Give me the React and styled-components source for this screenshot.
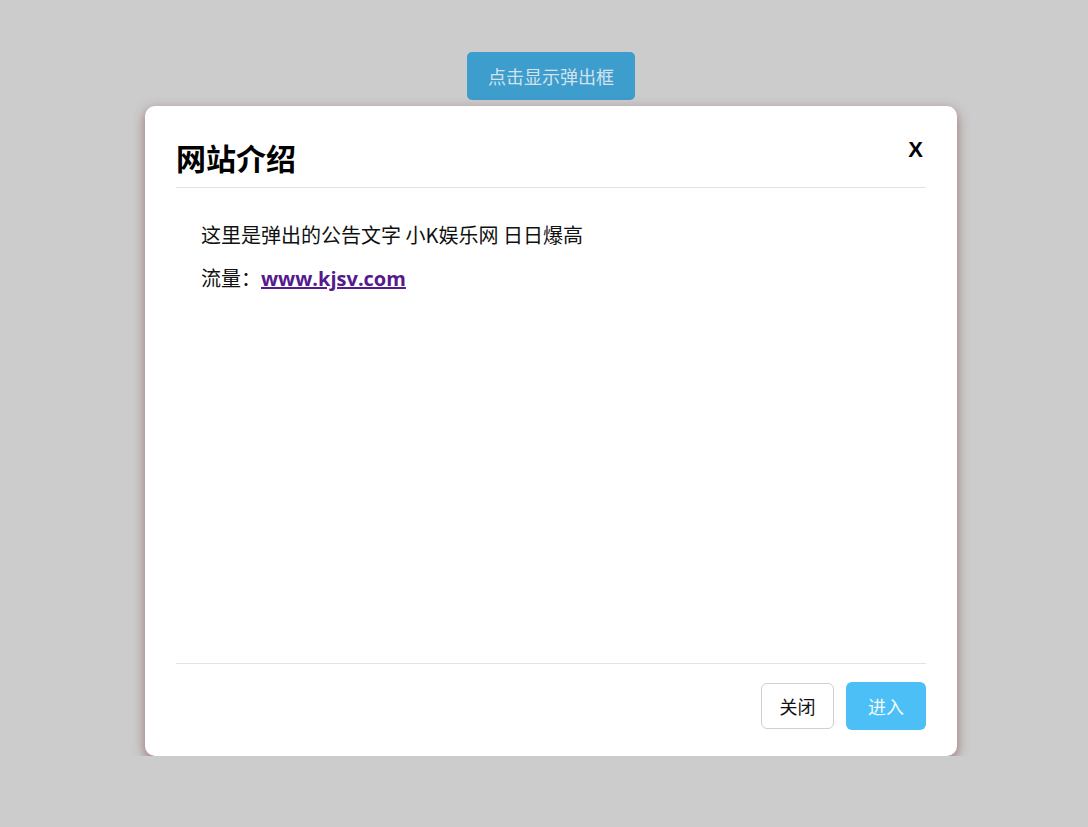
import React, { useState } from 'react';
import styled, { createGlobalStyle } from 'styled-components';

const GlobalStyle = createGlobalStyle`
  body {
    margin: 0;
    background-color: #cccccc;
    font-family: "Noto Sans CJK SC", "Noto Sans", sans-serif;
  }
`;

const Page = styled.div`
  display: flex;
  flex-direction: column;
  align-items: center;
  padding: 52px 0 0 14px;
  gap: 6px;
`;

const ShowButton = styled.button`
  width: 168px;
  height: 48px;
  border: none;
  border-radius: 5px;
  background-color: #3d9dcd;
  color: #d3e3ec;
  font-family: "Noto Sans CJK SC", sans-serif;
  font-size: 18px;
  cursor: pointer;
`;

const Modal = styled.div`
  width: 812px;
  height: 650px;
  box-sizing: border-box;
  padding: 0 31px;
  background-color: #fff;
  border-radius: 10px;
  box-shadow: 0 4px 12px rgba(120, 50, 50, 0.6);
  display: flex;
  flex-direction: column;
`;

const Header = styled.div`
  display: flex;
  justify-content: space-between;
  align-items: flex-start;
  padding: 31px 0 10px;
  border-bottom: 1px solid #e3e3e3;
`;

const Title = styled.h2`
  margin: 0;
  font-size: 30px;
  line-height: 40px;
  font-weight: 700;
  color: #000;
`;

const CloseX = styled.span`
  font-family: "Liberation Sans", Arial, sans-serif;
  font-size: 22px;
  line-height: 24px;
  font-weight: 700;
  color: #000;
  margin: 1px 3px 0 0;
  cursor: pointer;
`;

const Body = styled.div`
  flex: 1;
  padding: 32px 25px;
`;

const Text = styled.p`
  margin: 0 0 13px;
  font-size: 20px;
  line-height: 30px;
  color: #111;
`;

const Link = styled.a`
  font-family: "Open Sans", Verdana, sans-serif;
  font-weight: 700;
  font-size: 20px;
  color: #551a8b;
  text-decoration: underline;
`;

const Footer = styled.div`
  display: flex;
  justify-content: flex-end;
  align-items: center;
  gap: 12px;
  padding: 18px 0 26px;
  border-top: 1px solid #e3e3e3;
`;

const FooterButton = styled.button`
  width: ${(p) => (p.$primary ? '80px' : '73px')};
  height: ${(p) => (p.$primary ? '48px' : '46px')};
  padding: 0;
  border-radius: 6px;
  border: ${(p) => (p.$primary ? 'none' : '1px solid #cfcfcf')};
  background-color: ${(p) => (p.$primary ? '#4bbff6' : '#fff')};
  color: ${(p) => (p.$primary ? '#f2f9fd' : '#111')};
  font-family: "Noto Sans CJK SC", sans-serif;
  font-size: 18px;
  cursor: pointer;
`;

export default function App() {
  const [open, setOpen] = useState(true);

  return (
    <>
      <GlobalStyle />
      <Page>
        <ShowButton onClick={() => setOpen(true)}>点击显示弹出框</ShowButton>
        {open && (
          <Modal>
            <Header>
              <Title>网站介绍</Title>
              <CloseX onClick={() => setOpen(false)}>X</CloseX>
            </Header>
            <Body>
              <Text>这里是弹出的公告文字 小K娱乐网 日日爆高</Text>
              <Text>
                流量：<Link href="#">www.kjsv.com</Link>
              </Text>
            </Body>
            <Footer>
              <FooterButton onClick={() => setOpen(false)}>关闭</FooterButton>
              <FooterButton $primary>进入</FooterButton>
            </Footer>
          </Modal>
        )}
      </Page>
    </>
  );
}
